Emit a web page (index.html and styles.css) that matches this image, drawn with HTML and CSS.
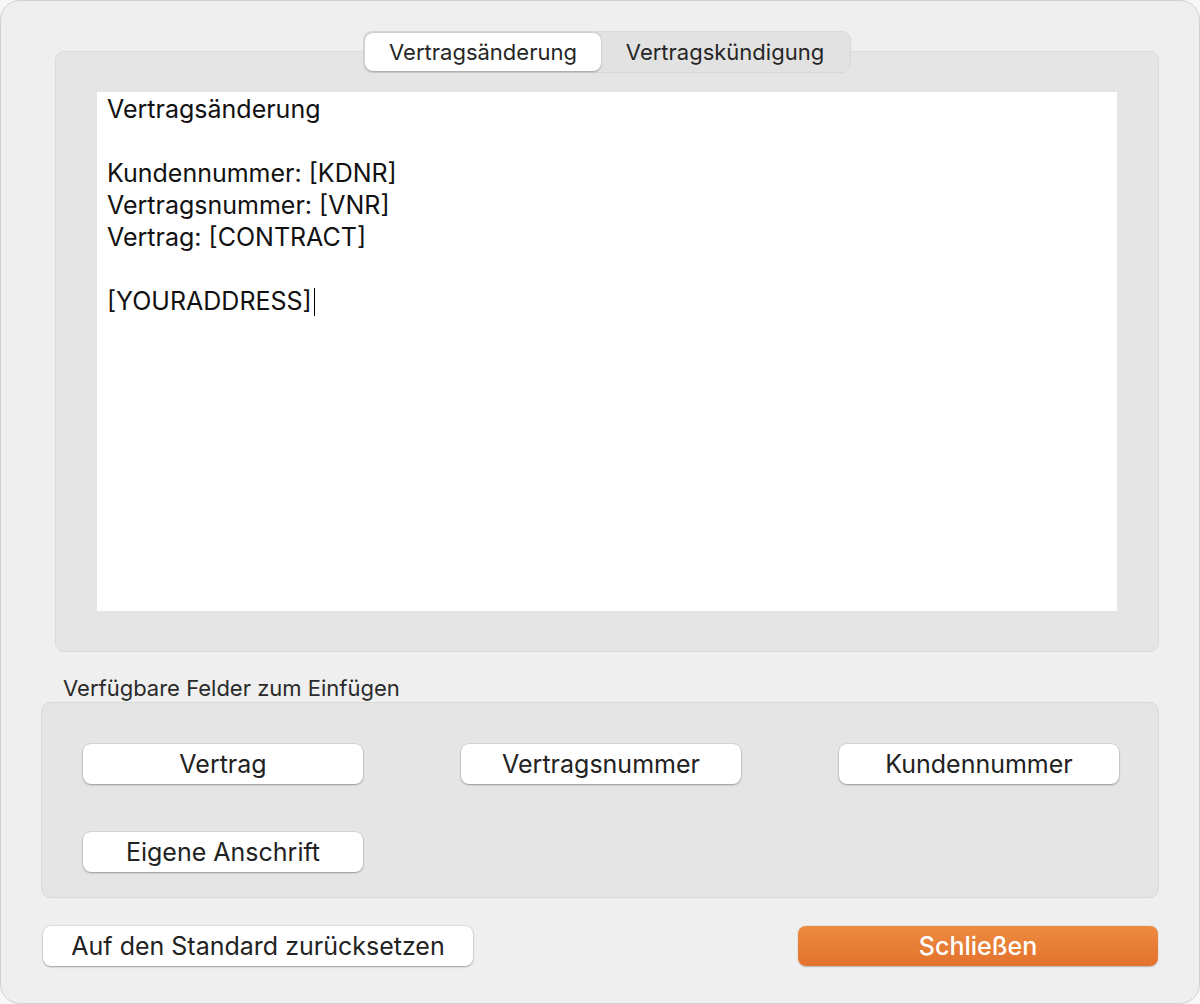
FILE: index.html
```
<!DOCTYPE html>
<html lang="de">
<head>
    <meta charset="UTF-8">
    <meta name="viewport" content="width=device-width, initial-scale=1.0">
    <title>Vorlagen</title>
    <link rel="stylesheet" href="styles.css">
</head>
<body>

<div class="window">

    <div class="tabview">
        <div class="tabs">
            <div class="tab active">Vertragsänderung</div>
            <div class="tab">Vertragskündigung</div>
        </div>
        <div class="tabbox">
            <div class="editor">
                <p>Vertragsänderung</p>
                <p>&nbsp;</p>
                <p>Kundennummer: [KDNR]</p>
                <p>Vertragsnummer: [VNR]</p>
                <p>Vertrag: [CONTRACT]</p>
                <p>&nbsp;</p>
                <p>[YOURADDRESS]<span class="caret"></span></p>
            </div>
        </div>
    </div>

    <div class="fieldlabel">Verfügbare Felder zum Einfügen</div>
    <div class="fields">
        <button class="btn">Vertrag</button>
        <button class="btn">Vertragsnummer</button>
        <button class="btn">Kundennummer</button>
        <button class="btn">Eigene Anschrift</button>
    </div>

    <div class="footer">
        <button class="btn reset">Auf den Standard zurücksetzen</button>
        <button class="btn primary">Schließen</button>
    </div>

</div>

</body>
</html>
```

FILE: styles.css
```
*{
    margin: 0px;
    padding: 0px;
    box-sizing: border-box;
}
body{
    background: #f7f7f7;
    font-family: Inter, "Noto Sans", sans-serif;
    color: #222222;
}
.window{
    width: 1200px;
    height: 1004px;
    background: #efefef;
    border: 1px solid #cfcfcf;
    border-radius: 20px;
    padding: 30px 40px 0px 40px;
    display: flex;
    flex-direction: column;
}

/* tab view */
.tabview{
    margin-left: 14px;
    display: flex;
    flex-direction: column;
}
.tabs{
    align-self: center;
    display: flex;
    height: 42px;
    padding: 1px;
    background: #e2e2e2;
    border: 1px solid #d8d8d8;
    border-radius: 9px;
    position: relative;
    z-index: 1;
}
.tab{
    width: 236px;
    display: flex;
    align-items: center;
    justify-content: center;
    font-size: 22px;
    color: #262626;
    border-radius: 8px;
}
.tab.active{
    background: #ffffff;
    box-shadow: 0 0.5px 2px rgba(0,0,0,0.3);
}
.tab:last-child{
    width: 248px;
}
.tabbox{
    margin-top: -22px;
    height: 601px;
    background: #e5e5e5;
    border: 1px solid #dadada;
    border-radius: 9px;
    padding: 40px 41px 40px 41px;
}
.editor{
    height: 100%;
    background: #ffffff;
    padding: 1px 10px;
    font-size: 25px;
    line-height: 32px;
    color: #111111;
}
.caret{
    display: inline-block;
    width: 0px;
    height: 28px;
    border-left: 1.5px solid #000000;
    vertical-align: -6px;
    margin-left: 2px;
}

/* fields */
.fieldlabel{
    margin-top: 23px;
    margin-left: 22px;
    font-size: 22px;
    color: #2a2a2a;
    height: 27px;
}
.fields{
    height: 196px;
    background: #e5e5e5;
    border: 1px solid #dadada;
    border-radius: 9px;
    padding: 41px 41px 0px 41px;
    display: grid;
    grid-template-columns: 280px 280px 280px;
    grid-auto-rows: 40px;
    column-gap: 98px;
    row-gap: 48px;
}
.btn{
    height: 40px;
    border: none;
    background: #ffffff;
    border-radius: 8px;
    box-shadow: 0 0 0 0.5px rgba(0,0,0,0.12), 0 1px 2px rgba(0,0,0,0.3);
    font-family: Inter, "Noto Sans", sans-serif;
    font-size: 25px;
    color: #222222;
}

/* footer */
.footer{
    margin-top: 28px;
    display: flex;
    justify-content: space-between;
    padding: 0px 1px 0px 2px;
}
.reset{
    width: 430px;
}
.primary{
    width: 360px;
    background: linear-gradient(#ec8b3f, #e4722d);
    color: #ffffff;
    font-weight: 500;
    box-shadow: 0 0.5px 1.5px rgba(0,0,0,0.25);
}
```
